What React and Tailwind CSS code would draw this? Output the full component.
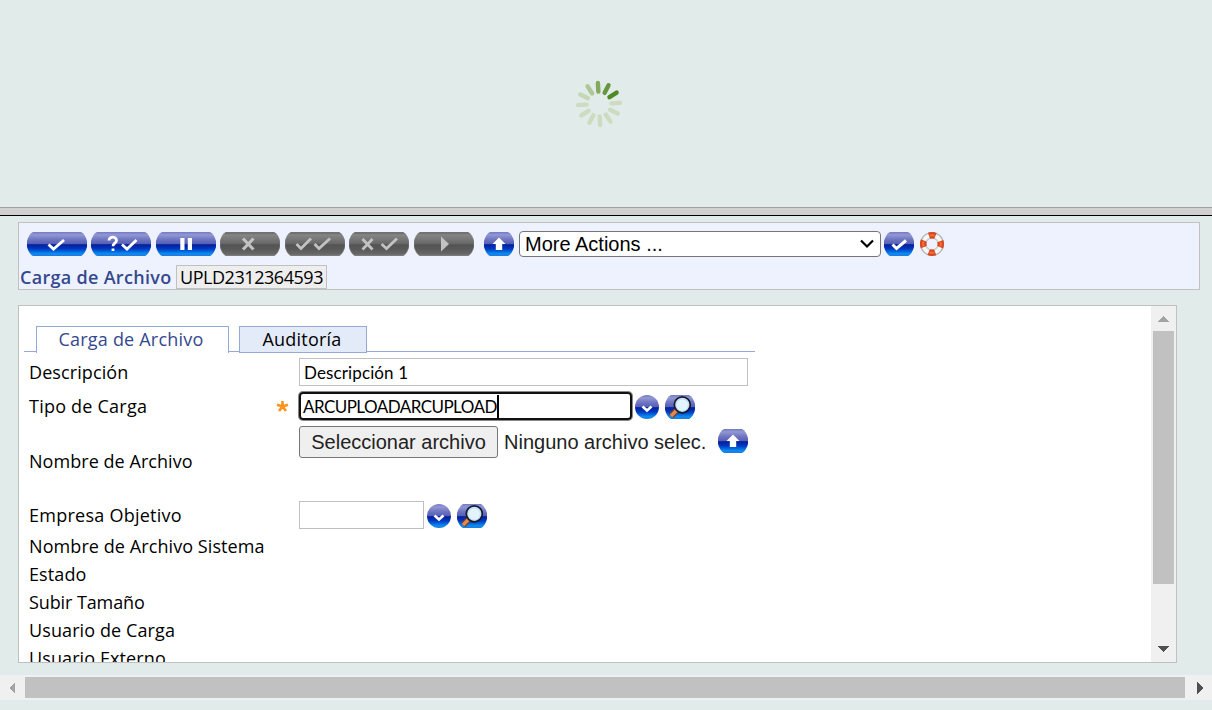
import React from "react";

const MARKS = {
  check: <path d="M-8.5 0.5 L-3.5 5 L7 -4" fill="none" strokeWidth="2.9" />,
  smallCheck: <path d="M-6.5 0.5 L-2.5 4.5 L7 -3.5" fill="none" strokeWidth="3" />,
  query: (
    <g fill="none" strokeWidth="2.8">
      <path d="M-12 -3.5 C-12 -8 -4.5 -8 -4.5 -3.5 C-4.5 -0.8 -8 -0.8 -8 2.2 M-8 4.6 V7" />
      <path d="M1 0.5 L6 5 L15.5 -4" />
    </g>
  ),
  pause: <path d="M-3.6 -6 V6 M3.9 -6 V6" fill="none" strokeWidth="4.2" />,
  cross: <path d="M-7 -5.5 L3.5 5.5 M3.5 -5.5 L-7 5.5" fill="none" strokeWidth="3.2" />,
  checks: <path d="M-18.5 0 L-14 4.5 L-4 -5.5 M-0.5 0 L4 4.5 L15 -5.5" fill="none" strokeWidth="2.8" />,
  crossCheck: <path d="M-16.5 -5 L-6.5 5.5 M-6.5 -5 L-16.5 5.5 M2.5 0 L7.5 4.5 L18 -5.5" fill="none" strokeWidth="2.8" />,
  play: <path d="M-3 -7.5 L5 0 L-3 7.5 Z" stroke="none" />,
  up: <path d="M0 -6.5 L6.5 0 H3.2 V6 H-3.2 V0 H-6.5 Z" stroke="none" />,
  down: <path d="M-4.5 -0.5 L0 3.5 L4.5 -0.5" fill="none" strokeWidth="2.5" />,
};

function Pill({ id, mark, w = 60, gray = false, className = "" }) {
  const ink = gray ? "#c2c2c2" : "#ffffff";
  const round = w === 24;
  return (
    <svg width={w} height="24" viewBox={`0 0 ${w} 24`} className={`block shrink-0 ${className}`}>
      <defs>
        <linearGradient id={id} x1="0" x2="0" y1="0" y2="1">
          <stop offset="0" stopColor={gray ? "#606060" : "#7279c5"} />
          <stop offset="0.12" stopColor={gray ? "#858585" : "#9298d2"} />
          <stop offset="0.3" stopColor={gray ? "#777777" : "#7077c2"} />
          <stop offset="0.48" stopColor={gray ? "#686868" : "#5860b8"} />
          <stop offset="0.53" stopColor={gray ? "#545454" : "#05209b"} />
          <stop offset="0.7" stopColor={gray ? "#585858" : "#0038c0"} />
          <stop offset="0.9" stopColor={gray ? "#666666" : "#078cf2"} />
          <stop offset="1" stopColor={gray ? "#7a7a7a" : "#2878d8"} />
        </linearGradient>
      </defs>
      {round ? (
        <circle cx="12" cy="12" r="12" fill={`url(#${id})`} />
      ) : (
        <path
          d={`M6 0 H${w - 6} Q${w - 2} 2 ${w} 9 V15 Q${w - 2} 22 ${w - 6} 24 H6 Q2 22 0 15 V9 Q2 2 6 0 Z`}
          fill={`url(#${id})`}
          stroke={gray ? "#8c8c8c" : "none"}
          strokeWidth="0.6"
        />
      )}
      {mark === "lens" ? (
        <g>
          <path d="M12 15 L6 21" stroke="#7b3f20" strokeWidth="6" />
          <path d="M12 15 L6 21" stroke="#e08a55" strokeWidth="3.4" />
          <circle cx="17.3" cy="9.8" r="8" fill="#c4e2f8" stroke="#171b2c" strokeWidth="1.7" />
          <circle cx="17.3" cy="10" r="5.6" fill="#e4f4fe" />
        </g>
      ) : (
        <g transform={`translate(${w / 2} 12)`} stroke={ink} fill={ink}>
          {MARKS[mark]}
        </g>
      )}
    </svg>
  );
}

function LifeRing() {
  return (
    <svg width="24" height="24" viewBox="0 0 24 24" className="ml-[6px] block shrink-0">
      <circle cx="12" cy="12" r="8.8" fill="none" stroke="#b0b0b0" strokeWidth="6.4" />
      <circle cx="12" cy="12" r="8.4" fill="none" stroke="#d8d8d8" strokeWidth="5" />
      <circle cx="12" cy="12" r="8.8" fill="none" stroke="#f8f8f8" strokeWidth="3.4" />
      <circle
        cx="12" cy="12" r="8.8" fill="none" stroke="#d9481c" strokeWidth="6.4"
        strokeDasharray="6.6 7.223" strokeDashoffset="3.3"
      />
      <circle
        cx="12" cy="12" r="8.8" fill="none" stroke="#f0713f" strokeWidth="2"
        strokeDasharray="5 8.823" strokeDashoffset="2.5"
      />
    </svg>
  );
}

const SPOKES = [
  "#83a95c", "#669640", "#4f8a25", "#cddcc0", "#cddcc0", "#cddcc0",
  "#cddcc0", "#cddcc0", "#cddcc0", "#cddcc0", "#c5d7b6", "#aec796",
];

function Spinner() {
  return (
    <svg width="48" height="48" viewBox="0 0 48 48" className="block">
      {SPOKES.map((c, i) => (
        <path
          key={i} d="M24 3 V11.5" stroke={c} strokeWidth="4.4" strokeLinecap="round"
          transform={`rotate(${i * 30 - 3} 24 24)`}
        />
      ))}
    </svg>
  );
}

function Arrow({ d, color, w, h }) {
  return (
    <svg width={w} height={h} viewBox={`0 0 ${w} ${h}`} className="block" shapeRendering="crispEdges">
      <path d={d} fill={color} />
    </svg>
  );
}

function Label({ children, className = "" }) {
  return <div className={`whitespace-nowrap pl-[10px] ${className}`}>{children}</div>;
}

export default function App() {
  return (
    <div className="flex h-[710px] w-[1212px] flex-col overflow-hidden bg-[#e1ebe9] font-['Open_Sans','Noto_Sans',sans-serif] text-[18px] leading-[28px] text-black">
      <div className="flex h-[207px] shrink-0 pt-[80px] pl-[575px]">
        <Spinner />
      </div>
      <div className="h-[9px] shrink-0 border-t border-b border-t-[#a0a0a0] border-b-black bg-[#d0d0d0]" />

      <div className="mt-[6px] ml-[18px] flex h-[68px] w-[1182px] shrink-0 flex-col border border-[#c0c0c0] bg-[#eef2ff]">
        <div className="flex h-[42px] items-center pl-[8px]">
          <Pill id="p1" mark="check" />
          <Pill id="p2" mark="query" className="ml-[4px]" />
          <Pill id="p3" mark="pause" className="ml-[5px]" />
          <Pill id="p4" mark="cross" gray className="ml-[4px]" />
          <Pill id="p5" mark="checks" gray className="ml-[5px]" />
          <Pill id="p6" mark="crossCheck" gray className="ml-[4px]" />
          <Pill id="p7" mark="play" gray className="ml-[5px]" />
          <Pill id="p8" mark="up" w={30} className="ml-[10px]" />
          <div className="ml-[5px] flex h-[26px] w-[362px] items-center justify-between rounded-[4px] border border-[#767676] bg-white pr-[5px] pl-[5px] font-['Liberation_Sans',Arial,sans-serif] text-[20px]">
            <span>More Actions ...</span>
            <svg width="16" height="12" viewBox="0 0 16 12">
              <path d="M2 2.5 L8 8.5 L14 2.5" fill="none" stroke="#000" strokeWidth="2.2" />
            </svg>
          </div>
          <Pill id="p9" mark="smallCheck" w={30} className="ml-[3px]" />
          <LifeRing />
        </div>
        <div className="flex h-[24px] items-center pl-[1px]">
          <span className="w-[156px] whitespace-nowrap font-semibold tracking-[0.3px] text-[#34498d]">Carga de Archivo</span>
          <div className="flex h-[24px] w-[151px] items-center border border-[#c0c0c0] bg-[#eeeeee] pl-[3px] tracking-[-0.45px]">UPLD2312364593</div>
        </div>
      </div>

      <div className="mt-[15px] ml-[18px] flex h-[358px] w-[1159px] shrink-0 overflow-hidden border border-[#c0c0c0] bg-white">
        <div className="h-[356px] w-[1132px] overflow-hidden">
          <div className="ml-[5px] flex h-[47px] w-[731px] items-end">
            <div className="mb-[1px] h-[1px] w-[12px] bg-[#95a9d3]" />
            <div className="flex h-[27px] w-[193px] items-center justify-center border border-b-0 border-[#95a9d3] pr-[3px] pb-[2px] tracking-[0.2px] text-[#34498d]">Carga de Archivo</div>
            <div className="mb-[1px] h-[1px] w-[10px] bg-[#95a9d3]" />
            <div className="flex h-[27px] w-[128px] items-center justify-center border border-[#95a9d3] bg-[#e4ebf8] pr-[2px] pb-[2px] tracking-[0.2px]">Auditoría</div>
            <div className="mb-[1px] h-[1px] flex-1 bg-[#95a9d3]" />
          </div>

          <div className="mt-[5px] flex h-[28px] items-center">
            <Label className="w-[280px] tracking-[0.1px]">Descripción</Label>
            <div className="flex h-[28px] w-[449px] items-center border border-[#c0c0c0] pt-[2px] pl-[4px] font-['Lato',sans-serif] text-[17px] tracking-[0.12px]">Descripción 1</div>
          </div>

          <div className="mt-[5px] flex h-[30px] items-center">
            <Label className="w-[257px] tracking-[0.22px]">Tipo de Carga</Label>
            <svg width="13" height="13" viewBox="0 0 13 13" className="block">
              <path d="M6.5 1 V6.5 M1 4.7 L6.5 6.5 M12 4.7 L6.5 6.5 M3 11 L6.5 6.5 M10 11 L6.5 6.5" stroke="#ff931f" strokeWidth="2.7" />
            </svg>
            <div className="ml-[10px] flex h-[28px] w-[333px] items-center rounded-[4px] border-2 border-[#111111] pl-[2px] font-['Lato',sans-serif] text-[17px] tracking-[-0.55px] ring-1 ring-[#111111]/50">
              <span className="pt-[2px]">ARCUPLOADARCUPLOAD</span>
              <span className="h-[23px] w-[2px] bg-black" />
            </div>
            <Pill id="d1" mark="down" w={24} className="mt-[2px] ml-[3px]" />
            <Pill id="l1" mark="lens" w={30} className="mt-[2px] ml-[6px]" />
          </div>

          <div className="mt-[5px] flex h-[68px]">
            <Label className="w-[280px] pt-[21px] tracking-[0.05px]">Nombre de Archivo</Label>
            <div className="flex h-[32px] w-[449px] items-center font-['Liberation_Sans',Arial,sans-serif] text-[20px] text-[#222222]">
              <div className="flex h-[32px] w-[199px] items-center justify-center rounded-[3px] border border-[#767676] bg-[#efefef] whitespace-nowrap">Seleccionar archivo</div>
              <span className="ml-[6px] w-[213px] whitespace-nowrap">Ninguno archivo selec.</span>
              <Pill id="u1" mark="up" w={30} className="mb-[2px] ml-[1px]" />
            </div>
          </div>

          <div className="mt-[7px] flex h-[28px] items-center">
            <Label className="w-[280px] tracking-[0.25px]">Empresa Objetivo</Label>
            <div className="h-[28px] w-[125px] border border-[#c0c0c0]" />
            <Pill id="d2" mark="down" w={24} className="mt-[2px] ml-[3px]" />
            <Pill id="l2" mark="lens" w={30} className="mt-[2px] ml-[6px]" />
          </div>

          <div className="mt-[3px] flex flex-col">
            <Label className="tracking-[0.08px]">Nombre de Archivo Sistema</Label>
            <Label className="tracking-[0.1px]">Estado</Label>
            <Label className="tracking-[-0.1px]">Subir Tamaño</Label>
            <Label className="tracking-[0.1px]">Usuario de Carga</Label>
            <Label className="tracking-[0.1px]">Usuario Externo</Label>
          </div>
        </div>
        <div className="flex h-[356px] w-[25px] flex-col items-center bg-[#f0f0f0]">
          <div className="flex h-[25px] items-center pt-[1px] pr-[1px]">
            <Arrow w={12} h={6} d="M0 6 L6 0 L12 6 Z" color="#a3a3a3" />
          </div>
          <div className="h-[253px] w-[21px] bg-[#c1c1c1]" />
          <div className="mt-[62px] pr-[1px]">
            <Arrow w={12} h={6} d="M0 0 H12 L6 6 Z" color="#505050" />
          </div>
        </div>
      </div>

      <div className="mt-[12px] flex h-[25px] shrink-0 items-center bg-[#f0f0f0]">
        <div className="flex w-[25px] pl-[9px]">
          <Arrow w={6} h={12} d="M6 0 V12 L0 6 Z" color="#a3a3a3" />
        </div>
        <div className="h-[21px] w-[1160px] bg-[#c1c1c1]" />
        <div className="pl-[12px]">
          <Arrow w={6} h={12} d="M0 0 L6 6 L0 12 Z" color="#505050" />
        </div>
      </div>
    </div>
  );
}
